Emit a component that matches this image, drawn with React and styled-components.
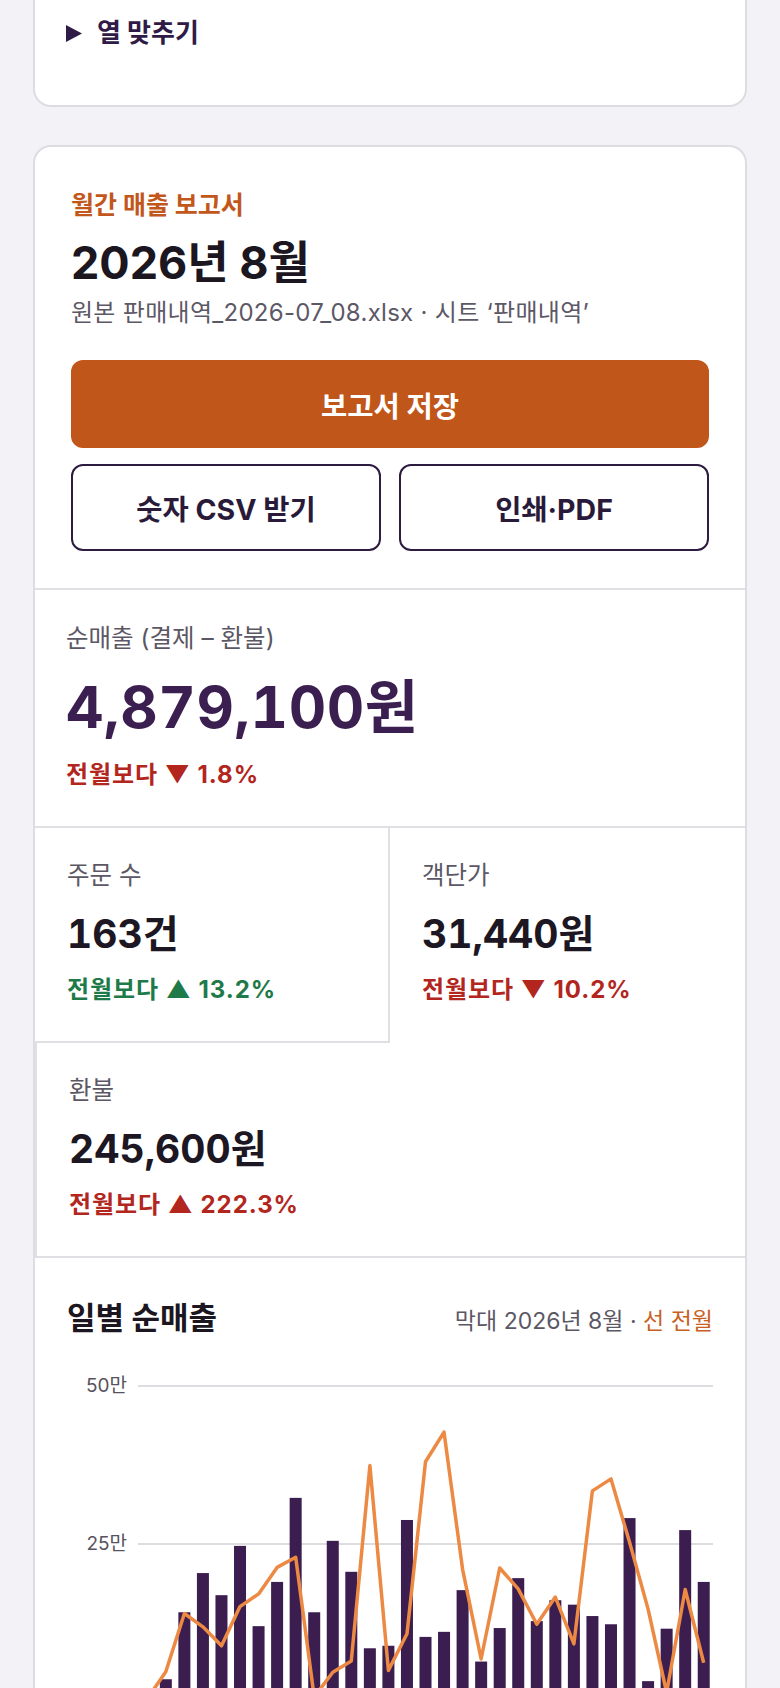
import React from 'react';
import styled, { createGlobalStyle, css } from 'styled-components';

const GlobalStyle = createGlobalStyle`
  html, body {
    margin: 0;
    padding: 0;
    background: #f3f2f6;
  }
  body {
    font-family: Inter, "Noto Sans CJK KR", sans-serif;
    color: #1c1722;
    -webkit-font-smoothing: antialiased;
  }
  * { box-sizing: border-box; }
`;

const Page = styled.div`
  display: flex;
  flex-direction: column;
  gap: 38px;
  padding: 0 33px 40px;
`;

const Card = styled.section`
  background: #fff;
  border: 2px solid #dedce3;
  border-radius: 18px;
  overflow: hidden;

  ${props => props.$continued && css`
    border-top: 0;
    border-top-left-radius: 0;
    border-top-right-radius: 0;
  `}
`;

const Disclosure = styled.div`
  display: flex;
  align-items: center;
  gap: 15px;
  padding: 17px 31px 56px;
  font-size: 26px;
  line-height: 32px;
  font-weight: 700;
  color: #2f1b46;
`;

const Header = styled.div`
  padding: 42px 36px 37px;
  border-bottom: 2px solid #e0dfe4;
`;

const Eyebrow = styled.div`
  font-size: 25px;
  line-height: 33px;
  font-weight: 700;
  color: #c2571c;
`;

const Title = styled.h1`
  margin: 13px 0 0;
  font-size: 45px;
  line-height: 56px;
  font-weight: 700;
  color: #1b1620;
`;

const Source = styled.div`
  margin-top: 7px;
  font-size: 24px;
  line-height: 30px;
  letter-spacing: 0.012em;
  color: #5d5866;
`;

const Actions = styled.div`
  display: grid;
  grid-template-columns: 1fr 1fr;
  gap: 16px 18px;
  margin-top: 32px;
`;

const Button = styled.button`
  font-family: inherit;
  font-size: 28.5px;
  font-weight: 700;
  border-radius: 12px;
  cursor: pointer;

  ${props => props.$primary ? css`
    grid-column: 1 / -1;
    height: 88px;
    border: 0;
    background: #c0561a;
    color: #fff;
  ` : css`
    height: 87px;
    border: 2px solid #2e1b40;
    background: #fff;
    color: #2a1a3a;
  `}
`;

const KpiGrid = styled.div`
  display: grid;
  grid-template-columns: 1fr 1fr;
`;

const KpiCell = styled.div`
  padding: ${props => props.$hero ? '33px 31px 36px' : '32px 32px 36px'};
  ${props => props.$wide && 'grid-column: 1 / -1;'}
  ${props => props.$right && 'border-right: 2px solid #e0dfe4;'}
  ${props => props.$bottom && 'border-bottom: 2px solid #e0dfe4;'}
  ${props => props.$left && 'border-left: 2px solid #e0dfe4;'}
`;

const KpiLabel = styled.div`
  font-size: 24.5px;
  line-height: 30px;
  color: #5c5764;
`;

const KpiValue = styled.div`
  margin-top: 19px;
  font-weight: 700;
  font-variant-numeric: tabular-nums;
  ${props => props.$hero ? css`
    font-size: 58px;
    line-height: 70px;
    color: #3a1f50;
    letter-spacing: 0.01em;
  ` : css`
    font-size: 39px;
    line-height: 50px;
    color: #1c1722;
  `}
`;

const Delta = styled.div`
  margin-top: ${props => props.$hero ? '18px' : '16px'};
  font-size: 24px;
  line-height: 30px;
  font-weight: 700;
  letter-spacing: 0.04em;
  color: ${props => props.$tone === 'good' ? '#1e7a48' : '#b3261e'};
`;

const ChartSection = styled.div`
  padding: 41px 32px 0;
`;

const ChartHead = styled.div`
  display: flex;
  justify-content: space-between;
  align-items: baseline;
`;

const ChartTitle = styled.h2`
  margin: 0;
  font-size: 31px;
  line-height: 38px;
  font-weight: 700;
  color: #1b1620;
`;

const Legend = styled.div`
  font-size: 23px;
  color: #5c5764;
`;

const LegendLine = styled.span`
  color: #c8611f;
`;

const ChartBox = styled.div`
  margin-top: 29px;
`;

const bars = [1.8, 3.6, 14.2, 20.4, 16.9, 24.7, 12.0, 19.0, 32.3, 14.2, 25.5, 20.6, 8.5, 8.9, 28.8, 10.3,
  11.1, 17.7, 6.4, 11.7, 19.6, 12.8, 16.1, 15.4, 13.6, 12.3, 29.1, 3.3, 11.6, 27.2, 19.0];
const prev = [0.5, 4.8, 14.0, 11.9, 8.9, 15.1, 17.1, 21.3, 22.9, 0.8, 4.7, 6.5, 37.4, 5.0, 10.8, 38.0,
  42.7, 21.0, 6.8, 21.2, 17.9, 12.3, 16.6, 9.2, 33.4, 35.3, 25.3, 14.7, 1.5, 17.8, 6.2];

const W = 646;
const H = 360;
const LEFT = 71;
const BASE = 336;
const UNIT = 6.32;
const step = (W - LEFT) / 31;

const DailyChart = () => {
  const cx = i => LEFT + step * (i + 0.5);
  const points = prev.map((v, i) => `${cx(i).toFixed(1)},${(BASE - v * UNIT).toFixed(1)}`).join(' ');

  return (
    <svg width="100%" viewBox={`0 0 ${W} ${H}`} style={{ display: 'block' }}>
      {[50, 25].map(t => (
        <g key={t}>
          <line x1={LEFT} x2={W} y1={BASE - t * UNIT} y2={BASE - t * UNIT} stroke="#dddce1" strokeWidth="2" />
          <text x="60" y={BASE - t * UNIT + 6} textAnchor="end" fontSize="19" fill="#57525e"
            fontFamily='Inter, "Noto Sans CJK KR", sans-serif'>{t}만</text>
        </g>
      ))}
      {bars.map((v, i) => (
        <rect key={i} x={cx(i) - 6} y={BASE - v * UNIT} width="12" height={v * UNIT} fill="#3b1d4f" />
      ))}
      <polyline points={points} fill="none" stroke="#ec8a44" strokeWidth="3.5" strokeLinejoin="round" />
    </svg>
  );
};

const App = () => (
  <>
    <GlobalStyle />
    <Page>
      <Card $continued>
        <Disclosure>
          <svg width="16" height="17" viewBox="0 0 16 17"><polygon points="0,0 16,8.5 0,17" fill="#2f1b46" /></svg>
          열 맞추기
        </Disclosure>
      </Card>

      <Card>
        <Header>
          <Eyebrow>월간 매출 보고서</Eyebrow>
          <Title>2026년 8월</Title>
          <Source>원본 판매내역_2026-07_08.xlsx · 시트 ‘판매내역’</Source>
          <Actions>
            <Button $primary>보고서 저장</Button>
            <Button>숫자 CSV 받기</Button>
            <Button>인쇄·PDF</Button>
          </Actions>
        </Header>

        <KpiGrid>
          <KpiCell $hero $wide $bottom>
            <KpiLabel>순매출 (결제 – 환불)</KpiLabel>
            <KpiValue $hero>4,879,100원</KpiValue>
            <Delta $hero $tone="bad">전월보다 ▼ 1.8%</Delta>
          </KpiCell>
          <KpiCell $right $bottom>
            <KpiLabel>주문 수</KpiLabel>
            <KpiValue>163건</KpiValue>
            <Delta $tone="good">전월보다 ▲ 13.2%</Delta>
          </KpiCell>
          <KpiCell>
            <KpiLabel>객단가</KpiLabel>
            <KpiValue>31,440원</KpiValue>
            <Delta $tone="bad">전월보다 ▼ 10.2%</Delta>
          </KpiCell>
          <KpiCell $wide $left $bottom>
            <KpiLabel>환불</KpiLabel>
            <KpiValue>245,600원</KpiValue>
            <Delta $tone="bad">전월보다 ▲ 222.3%</Delta>
          </KpiCell>
        </KpiGrid>

        <ChartSection>
          <ChartHead>
            <ChartTitle>일별 순매출</ChartTitle>
            <Legend>막대 2026년 8월 · <LegendLine>선 전월</LegendLine></Legend>
          </ChartHead>
          <ChartBox>
            <DailyChart />
          </ChartBox>
        </ChartSection>
      </Card>
    </Page>
  </>
);

export default App;
